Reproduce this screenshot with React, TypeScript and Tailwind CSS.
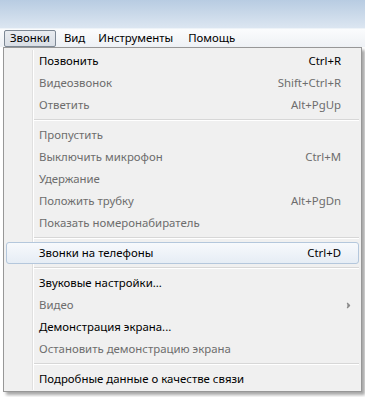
import { ChevronRight } from 'lucide-react';

interface Item {
  label: string;
  shortcut?: string;
  disabled?: boolean;
  hot?: boolean;
  submenu?: boolean;
}

type Entry = Item | 'sep';

const entries: Entry[] = [
  { label: 'Позвонить', shortcut: 'Ctrl+R' },
  { label: 'Видеозвонок', shortcut: 'Shift+Ctrl+R', disabled: true },
  { label: 'Ответить', shortcut: 'Alt+PgUp', disabled: true },
  'sep',
  { label: 'Пропустить', disabled: true },
  { label: 'Выключить микрофон', shortcut: 'Ctrl+M', disabled: true },
  { label: 'Удержание', disabled: true },
  { label: 'Положить трубку', shortcut: 'Alt+PgDn', disabled: true },
  { label: 'Показать номеронабиратель', disabled: true },
  'sep',
  { label: 'Звонки на телефоны', shortcut: 'Ctrl+D', hot: true },
  'sep',
  { label: 'Звуковые настройки...' },
  { label: 'Видео', disabled: true, submenu: true },
  { label: 'Демонстрация экрана...' },
  { label: 'Остановить демонстрацию экрана', disabled: true },
  'sep',
  { label: 'Подробные данные о качестве связи' },
];

const MenuRow = ({ item }: { item: Item }) => {
  const color = item.disabled ? 'text-[#6d6d6d]' : 'text-black';
  return (
    <div
      className={`relative flex h-[22px] items-center pl-[32px] pr-[17px] ${color} ${
        item.hot
          ? 'rounded-[3px] border border-[#b4c7dc] bg-gradient-to-b from-[#f7f9fc] to-[#e6edf5]'
          : 'border border-transparent'
      }`}
    >
      <span className="flex-1 whitespace-nowrap">{item.label}</span>
      {item.shortcut && <span className="whitespace-nowrap">{item.shortcut}</span>}
      {item.submenu && <ChevronRight className="-mr-[12px] h-[9px] w-[9px] fill-[#8a8a8a] text-[#8a8a8a]" strokeWidth={3} />}
    </div>
  );
};

export default function App() {
  return (
    <div
      className="h-[397px] w-[365px] overflow-hidden bg-white text-[11.4px]"
      style={{ fontFamily: '"Noto Sans", "Open Sans", sans-serif' }}
    >
      <div className="h-[28px] bg-gradient-to-b from-[#b8cce2] to-[#dce6f1]" />
      <div className="flex h-[19px] items-center border-t border-[#eef3f8] bg-gradient-to-b from-[#fbfcfd] to-[#eef1f5] pl-[4px]">
        <div className="flex h-[17px] items-center rounded-[2px] border border-[#7d8894] bg-gradient-to-b from-[#e9ecf0] to-[#d9dee5] px-[5px]">
          Звонки
        </div>
        <span className="ml-[8px]">Вид</span>
        <span className="ml-[13px]">Инструменты</span>
        <span className="ml-[15px]">Помощь</span>
      </div>
      <div className="ml-[3px] w-[359px] border border-[#979797] bg-[#f0f0f0] px-[2px] pb-[1px] pt-[2px] shadow-[3px_3px_3px_rgba(0,0,0,0.35)]">
        <div className="relative">
          <div className="absolute bottom-0 left-[26px] top-0 w-[2px] border-l border-[#e0e0e0] border-r-white" style={{ borderRightWidth: 1 }} />
          {entries.map((e, i) =>
            e === 'sep' ? (
              <div key={i} className="flex h-[8px] items-center pl-[28px]">
                <div className="h-[2px] flex-1 border-b border-t border-b-white border-t-[#d7d7d7]" />
              </div>
            ) : (
              <MenuRow key={i} item={e} />
            )
          )}
        </div>
      </div>
    </div>
  );
}
